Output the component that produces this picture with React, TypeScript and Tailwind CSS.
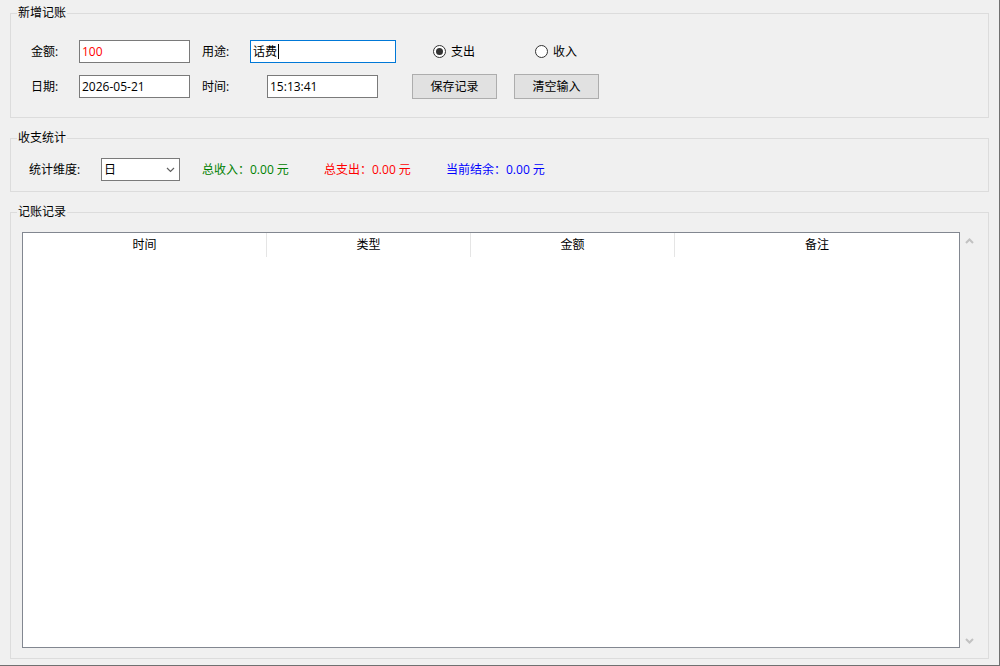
import React from "react";

const font = { fontFamily: '"Open Sans", "Noto Sans CJK SC", "Microsoft YaHei", sans-serif' };

function GroupBox({ title, className, children }: { title: string; className: string; children: React.ReactNode }) {
  return (
    <div className={`relative ml-[10px] w-[979px] border border-[#dcdcdc] ${className}`}>
      <span className="absolute -top-[9px] left-[6px] bg-[#f0f0f0] px-[1px] text-[12px] leading-[16px] text-black">
        {title}
      </span>
      {children}
    </div>
  );
}

function TextBox({ value, width, red, focused }: { value: string; width: string; red?: boolean; focused?: boolean }) {
  return (
    <div
      className={`flex h-[23px] items-center bg-white pl-[2px] text-[12px] ${width} border ${
        focused ? "border-[#0078d7]" : "border-[#7a7a7a]"
      } ${red ? "text-[#ff0000]" : "text-black"}`}
    >
      <span>{value}</span>
      {focused && <span className="ml-[1px] h-[15px] w-[1px] bg-black" />}
    </div>
  );
}

function Radio({ label, checked }: { label: string; checked?: boolean }) {
  return (
    <div className="flex items-center gap-[5px] text-[12px] text-black">
      <span className="flex h-[13px] w-[13px] items-center justify-center rounded-full border border-[#333333] bg-white">
        {checked && <span className="h-[7px] w-[7px] rounded-full bg-[#333333]" />}
      </span>
      <span>{label}</span>
    </div>
  );
}

function Button({ label }: { label: string }) {
  return (
    <div className="flex h-[25px] w-[85px] items-center justify-center border border-[#adadad] bg-[#e1e1e1] text-[12px] text-black">
      {label}
    </div>
  );
}

function Chevron({ up, color, weight }: { up?: boolean; color: string; weight: number }) {
  return (
    <svg width="9" height="6" viewBox="0 0 9 6">
      <polyline
        points={up ? "1,5 4.5,1.5 8,5" : "1,1 4.5,4.5 8,1"}
        fill="none"
        stroke={color}
        strokeWidth={weight}
      />
    </svg>
  );
}

export default function App() {
  return (
    <div style={font} className="h-[666px] w-[1000px] overflow-hidden border-b border-r border-[#707070] bg-[#f0f0f0]">
      <div className="h-[13px]" />
      {/* 新增记账 */}
      <GroupBox title="新增记账" className="h-[105px]">
        <div className="flex flex-col gap-[11px] pl-[20px] pt-[26px]">
          <div className="flex items-center">
            <span className="w-[48px] text-[12px]">金额:</span>
            <TextBox value="100" width="w-[111px]" red />
            <span className="ml-[12px] w-[48px] text-[12px]">用途:</span>
            <TextBox value="话费" width="w-[146px]" focused />
            <div className="ml-[37px] w-[102px]">
              <Radio label="支出" checked />
            </div>
            <Radio label="收入" />
          </div>
          <div className="flex items-center">
            <span className="w-[48px] text-[12px]">日期:</span>
            <TextBox value="2026-05-21" width="w-[111px]" />
            <span className="ml-[12px] w-[65px] text-[12px]">时间:</span>
            <TextBox value="15:13:41" width="w-[111px]" />
            <div className="ml-[34px]">
              <Button label="保存记录" />
            </div>
            <div className="ml-[17px]">
              <Button label="清空输入" />
            </div>
          </div>
        </div>
      </GroupBox>

      {/* 收支统计 */}
      <GroupBox title="收支统计" className="mt-[20px] h-[54px]">
        <div className="flex items-center pl-[18px] pt-[19px] text-[12px]">
          <span className="w-[72px]">统计维度:</span>
          <div className="flex h-[23px] w-[79px] items-center justify-between border border-[#7a7a7a] bg-white pl-[2px] pr-[4px]">
            <span>日</span>
            <Chevron color="#606060" weight={1.2} />
          </div>
          <span className="ml-[22px] w-[122px] text-[#008000]">总收入：0.00 元</span>
          <span className="w-[122px] text-[#ff0000]">总支出：0.00 元</span>
          <span className="text-[#0000ff]">当前结余：0.00 元</span>
        </div>
      </GroupBox>

      {/* 记账记录 */}
      <GroupBox title="记账记录" className="mt-[20px] h-[447px]">
        <div className="flex pl-[11px] pt-[19px]">
          <div className="h-[416px] w-[938px] border border-[#828790] bg-white">
            <div className="flex h-[24px] text-[12px] text-black">
              <div className="flex w-[244px] items-center justify-center border-r border-[#e5e5e5]">时间</div>
              <div className="flex w-[204px] items-center justify-center border-r border-[#e5e5e5]">类型</div>
              <div className="flex w-[204px] items-center justify-center border-r border-[#e5e5e5]">金额</div>
              <div className="flex flex-1 items-center justify-center">备注</div>
            </div>
          </div>
          <div className="flex h-[416px] w-[18px] flex-col items-center justify-between pb-[4px] pt-[6px]">
            <Chevron up color="#c2c2c2" weight={2} />
            <Chevron color="#c2c2c2" weight={2} />
          </div>
        </div>
      </GroupBox>
    </div>
  );
}
